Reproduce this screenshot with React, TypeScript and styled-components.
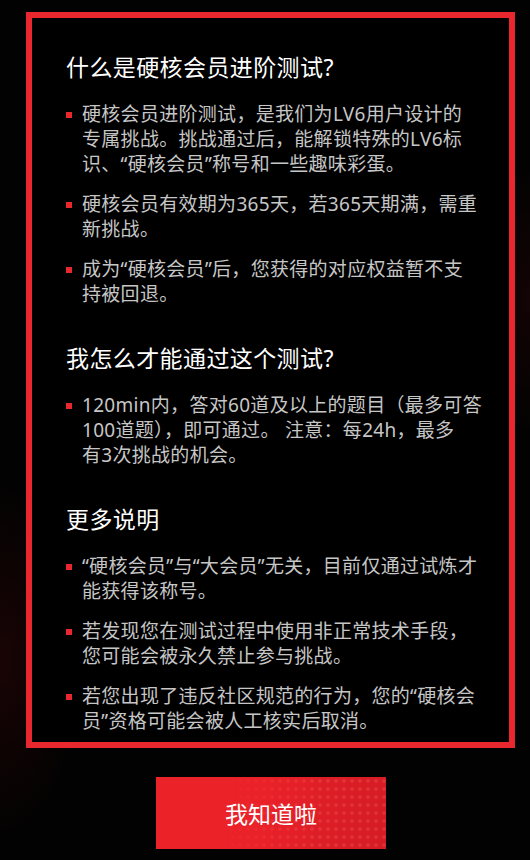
import React from 'react';
import styled, { createGlobalStyle } from 'styled-components';

const GlobalStyle = createGlobalStyle`
  * {
    box-sizing: border-box;
  }
  html, body {
    margin: 0;
    padding: 0;
    background: #020202;
  }
  body {
    font-family: "Noto Sans", "Noto Sans CJK SC", sans-serif;
  }
`;

const Page = styled.div`
  position: relative;
  width: 530px;
  height: 860px;
  overflow: hidden;
  background:
    radial-gradient(ellipse 120px 260px at 0px 660px, rgba(70, 8, 10, 0.35), transparent 70%),
    radial-gradient(ellipse 90px 200px at 530px 300px, rgba(60, 8, 10, 0.3), transparent 70%),
    #020202;
  padding-top: 12px;
`;

const Panel = styled.div`
  margin-left: 26px;
  width: 489px;
  border: 6px solid #e8272e;
  background: #000;
  padding: 34px 10px 8px 34px;
`;

const Heading = styled.h2<{ $first?: boolean }>`
  margin: ${(p) => (p.$first ? '0' : '36px')} 0 20px 0;
  font-size: 23px;
  line-height: 30px;
  font-weight: 400;
  letter-spacing: 0.4px;
  color: #ffffff;
  white-space: nowrap;
`;

const List = styled.ul`
  list-style: none;
  margin: 0;
  padding: 0;
  display: flex;
  flex-direction: column;
  gap: 15px;
`;

const Item = styled.li`
  position: relative;
  padding-left: 16px;
  font-size: 19px;
  line-height: 25px;
  letter-spacing: 0.3px;
  color: #c6c6c6;
  white-space: nowrap;

  &::before {
    content: '';
    position: absolute;
    left: 0;
    top: 10px;
    width: 6px;
    height: 6px;
    background: #e8272e;
  }
`;

const Footer = styled.div`
  display: flex;
  justify-content: center;
  padding-top: 29px;
  padding-left: 12px;
`;

const ConfirmButton = styled.button`
  position: relative;
  overflow: hidden;
  width: 230px;
  height: 72px;
  border: none;
  padding: 0;
  cursor: pointer;
  font-family: "Noto Sans CJK SC", "Noto Sans", sans-serif;
  font-size: 23px;
  color: #fff;
  background:
    radial-gradient(circle at center, rgba(255, 120, 120, 0.22) 1.5px, transparent 2px) 0 0 / 8px 8px,
    linear-gradient(100deg, #ec2229 0%, #e62028 45%, #d41c24 100%);

  &::before {
    content: '';
    position: absolute;
    inset: 0;
    background: linear-gradient(100deg, #ec2229 0%, #ec2229 30%, rgba(236, 34, 41, 0) 70%);
  }

  span {
    position: relative;
  }
`;

const sections: { title: string; items: string[][] }[] = [
  {
    title: '什么是硬核会员进阶测试?',
    items: [
      [
        '硬核会员进阶测试，是我们为LV6用户设计的',
        '专属挑战。挑战通过后，能解锁特殊的LV6标',
        '识、“硬核会员”称号和一些趣味彩蛋。',
      ],
      ['硬核会员有效期为365天，若365天期满，需重', '新挑战。'],
      ['成为“硬核会员”后，您获得的对应权益暂不支', '持被回退。'],
    ],
  },
  {
    title: '我怎么才能通过这个测试?',
    items: [
      [
        '120min内，答对60道及以上的题目（最多可答',
        '100道题），即可通过。 注意：每24h，最多',
        '有3次挑战的机会。',
      ],
    ],
  },
  {
    title: '更多说明',
    items: [
      ['“硬核会员”与“大会员”无关，目前仅通过试炼才', '能获得该称号。'],
      ['若发现您在测试过程中使用非正常技术手段，', '您可能会被永久禁止参与挑战。'],
      ['若您出现了违反社区规范的行为，您的“硬核会', '员”资格可能会被人工核实后取消。'],
    ],
  },
];

const App: React.FC = () => {
  return (
    <>
      <GlobalStyle />
      <Page>
        <Panel>
          {sections.map((section, i) => (
            <section key={section.title}>
              <Heading $first={i === 0}>{section.title}</Heading>
              <List>
                {section.items.map((lines, j) => (
                  <Item key={j}>
                    {lines.map((line, k) => (
                      <React.Fragment key={k}>
                        {k > 0 && <br />}
                        {line}
                      </React.Fragment>
                    ))}
                  </Item>
                ))}
              </List>
            </section>
          ))}
        </Panel>
        <Footer>
          <ConfirmButton>
            <span>我知道啦</span>
          </ConfirmButton>
        </Footer>
      </Page>
    </>
  );
};

export default App;
